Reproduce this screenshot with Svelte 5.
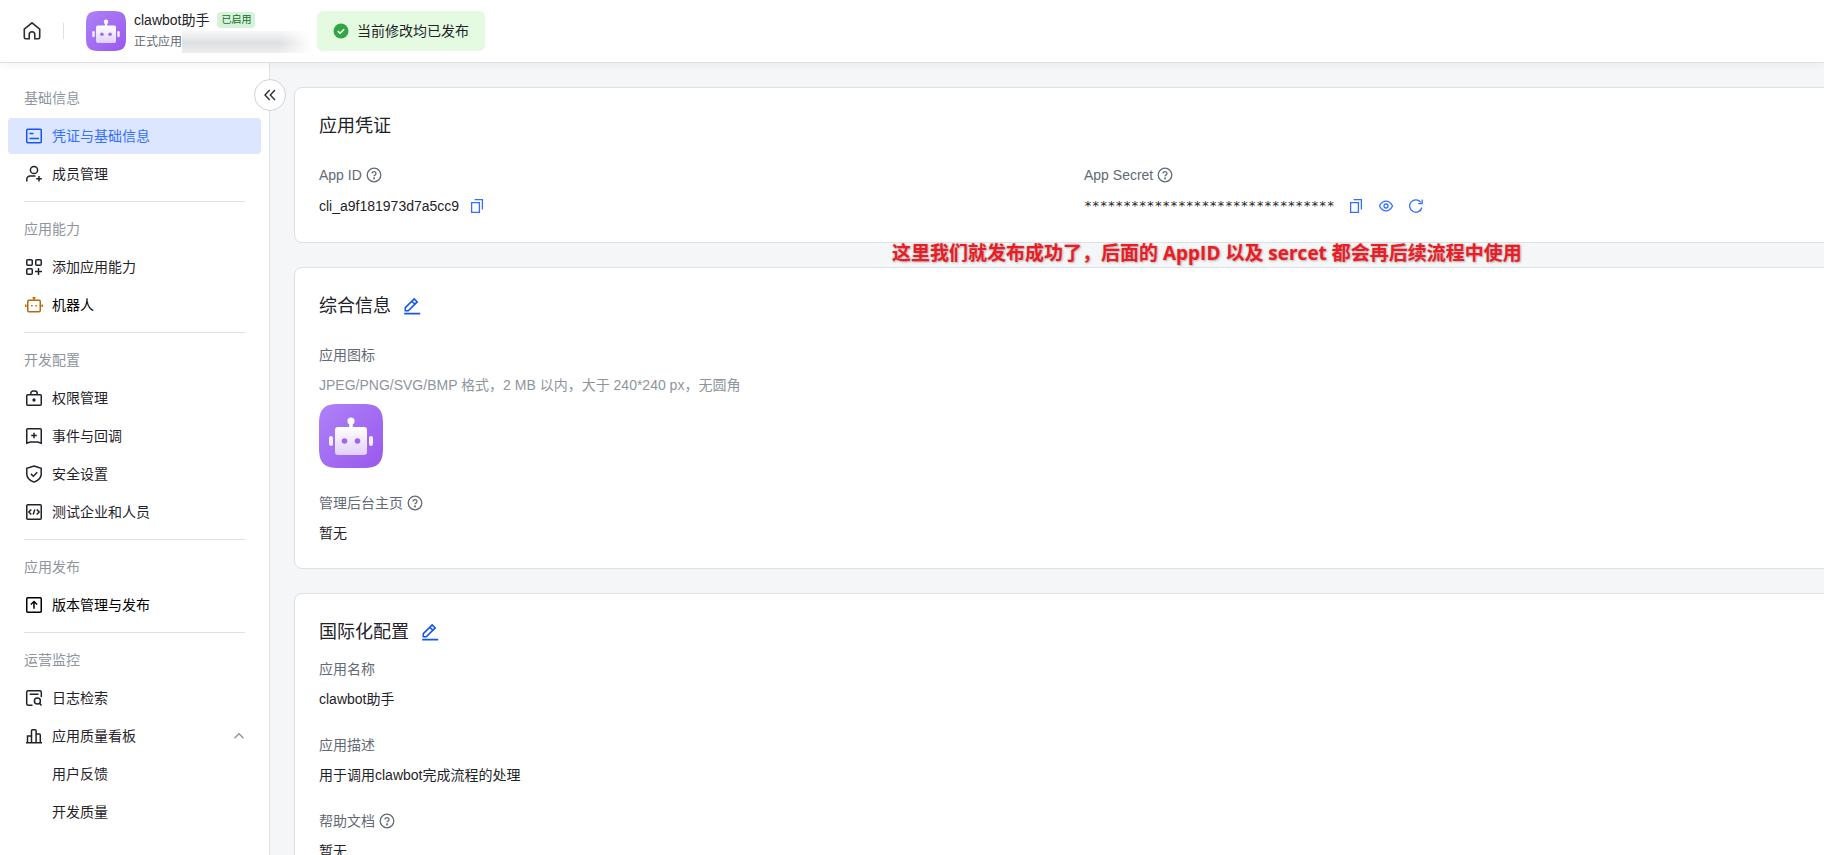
<script>
  let secretVisible = false;
  let qualityOpen = true;
  let collapsed = false;

  const groups = [
    {
      title: '基础信息',
      items: [
        { label: '凭证与基础信息', icon: 'profile', active: true },
        { label: '成员管理', icon: 'member' },
      ],
    },
    {
      title: '应用能力',
      items: [
        { label: '添加应用能力', icon: 'grid' },
        { label: '机器人', icon: 'bot', dark: true },
      ],
    },
    {
      title: '开发配置',
      items: [
        { label: '权限管理', icon: 'lock' },
        { label: '事件与回调', icon: 'event' },
        { label: '安全设置', icon: 'shield' },
        { label: '测试企业和人员', icon: 'code' },
      ],
    },
    {
      title: '应用发布',
      items: [{ label: '版本管理与发布', icon: 'publish', dark: true }],
    },
    {
      title: '运营监控',
      items: [
        { label: '日志检索', icon: 'log' },
        { label: '应用质量看板', icon: 'chart', children: ['用户反馈', '开发质量'] },
      ],
    },
  ];

  // 18x18 outline icons
  const icons = {
    profile: '<rect x="1.75" y="2.25" width="14.5" height="13.5" rx="1"/><path d="M4.5 6.5h4M4.5 11.5h9.5"/>',
    member: '<circle cx="9" cy="5" r="3.6"/><path d="M1.8 16.5v-2.3a3.2 3.2 0 0 1 3.2-3.2h5.5M14 11v5.6M11.2 13.8h5.6"/>',
    grid: '<rect x="1.75" y="1.75" width="5.5" height="5.5" rx="1"/><rect x="10.75" y="1.75" width="5.5" height="5.5" rx="1"/><rect x="1.75" y="10.75" width="5.5" height="5.5" rx="1"/><path d="M13.5 10v7M10 13.5h7"/>',
    bot: '<rect x="2.75" y="4.25" width="12.5" height="11.5" rx="1.2"/><path d="M9 4V1.5M7.6 1.8h2.8M.8 8.5v2.6M17.2 8.5v2.6M6.9 9v1.6M11.1 9v1.6"/>',
    lock: '<rect x="1.75" y="5.75" width="14.5" height="10.5" rx="1"/><path d="M5.8 5.5V4.4A2.4 2.4 0 0 1 8.2 2h1.6a2.4 2.4 0 0 1 2.4 2.4v1.1"/><circle cx="9" cy="11" r=".9" fill="currentColor"/>',
    event: '<path d="M1.75 2.75a1 1 0 0 1 1-1h12.5a1 1 0 0 1 1 1v13.5l-3.5-1.2h-7.5l-3.5 1.2zM9 5.700v5.600M6.200 8.500h5.600"/>',
    shield: '<path d="M9 1l7.2 2.4v5.8c0 3.600-3.400 6.400-7.200 7.900-3.800-1.500-7.200-4.300-7.200-7.900V3.400z"/><path d="M5.900 8.900l2.400 2.300 4-4"/>',
    code: '<rect x="1.75" y="1.75" width="14.5" height="14.5" rx="1"/><path d="M6.300 6.400 3.800 9l2.500 2.600M11.700 6.400 14.200 9l-2.500 2.600M9.800 6.500l-1.600 5"/>',
    publish: '<rect x="1.75" y="1.75" width="14.5" height="14.5" rx="1"/><path d="M9 12.800v-7M5.900 8.500l3.100-3 3.100 3"/>',
    log: '<path d="M7.500 16.250H3.200a1.500 1.500 0 0 1-1.500-1.500V3.250a1.500 1.500 0 0 1 1.500-1.500h11.600a1.500 1.500 0 0 1 1.500 1.500V8M4.700 5.300h8.800"/><circle cx="12.400" cy="12" r="3"/><path d="M14.500 14.200l2 2.300"/>',
    chart: '<path d="M1 15.750h16M2.500 15.500V9h3.800M6.500 15.500V3.750a1 1 0 0 1 1-1h2.600a1 1 0 0 1 1 1V15.500M11.300 7h3a1 1 0 0 1 1 1v7.500"/>',
  };
</script>

{#snippet robot(size, id)}
  <svg class="robot" width={size} height={size} viewBox="0 0 64 64" aria-hidden="true">
    <defs>
      <linearGradient id="{id}-bg" x1="0" y1="0" x2="1" y2="1">
        <stop offset="0" stop-color="#ad82f7" />
        <stop offset="1" stop-color="#9a58ee" />
      </linearGradient>
      <linearGradient id="{id}-face" x1="0" y1="0" x2="0" y2="1">
        <stop offset="0" stop-color="#fff" />
        <stop offset="1" stop-color="#e2d0fb" />
      </linearGradient>
    </defs>
    <path d="M0 20C0 5 5 0 20 0h24c15 0 20 5 20 20v24c0 15-5 20-20 20H20C5 64 0 59 0 44z" fill="url(#{id}-bg)" />
    <circle cx="32" cy="17" r="3.6" fill="#fff" />
    <path d="M30.2 18h3.6v6h-3.6z" fill="#fff" />
    <rect x="16" y="23" width="32" height="28" rx="3" fill="url(#{id}-face)" />
    <rect x="10" y="32" width="4" height="10" rx="2" fill="#f4edfe" />
    <rect x="50" y="32" width="4" height="10" rx="2" fill="#f4edfe" />
    <circle cx="25.5" cy="37" r="2.8" fill="#a066f0" />
    <circle cx="38.5" cy="37" r="2.8" fill="#a066f0" />
  </svg>
{/snippet}

{#snippet help(label)}
  <button class="icon-btn help" aria-label={label}>
    <svg width="16" height="16" viewBox="0 0 16 16">
      <circle cx="8" cy="8" r="6.8" />
      <path d="M6 6.500a2 1.900 0 1 1 3 1.600c-.7.4-1 .7-1 1.200" />
      <circle cx="8" cy="11.400" r=".4" />
    </svg>
  </button>
{/snippet}

{#snippet copy(label)}
  <button class="icon-btn" aria-label={label}>
    <svg width="14" height="14" viewBox="0 0 14 14">
      <path d="M1.600 3.600h7.800v9.800H1.600zM4.600.600h7.800v9.800" />
    </svg>
  </button>
{/snippet}

{#snippet edit(label)}
  <button class="icon-btn edit" aria-label={label}>
    <svg width="18" height="18" viewBox="0 0 18 18">
      <path d="M2.300 13.700v-3.100l8.900-8.700 3 3-8.900 8.800zM8.900 4.300l2.900 2.900M1.200 16.600h16" />
    </svg>
  </button>
{/snippet}

<div class="page">
  <header class="topbar">
    <a class="home" href="#home" aria-label="首页">
      <svg width="20" height="20" viewBox="0 0 20 20">
        <path d="M2.300 8.200 10 1.800l7.700 6.400v8.300a1.200 1.200 0 0 1-1.200 1.200h-3.700v-4.200a2.800 2.800 0 0 0-5.600 0v4.200H3.500a1.200 1.200 0 0 1-1.200-1.200z" />
      </svg>
    </a>
    <span class="bar"></span>
    <div class="app">
      {@render robot(40, 'small')}
      <div class="app-text">
        <div class="app-name">clawbot助手 <span class="badge">已启用</span></div>
        <div class="app-sub">正式应用<span class="mask"></span></div>
      </div>
    </div>
    <div class="notice">
      <svg width="16" height="16" viewBox="0 0 16 16" aria-hidden="true">
        <circle cx="8" cy="8" r="7.5" fill="#32a645" />
        <path d="M4.800 8.100l2.300 2.200 4.100-4" fill="none" stroke="#fff" stroke-width="1.5" />
      </svg>
      <span>当前修改均已发布</span>
    </div>
  </header>

  <div class="body">
    <div class="side" class:collapsed>
      <nav>
        {#each groups as group}
          <section class="group">
            <h2>{group.title}</h2>
            {#each group.items as item}
              {#if item.children}
                <button class="item" aria-expanded={qualityOpen} on:click={() => (qualityOpen = !qualityOpen)}>
                  <svg class="nav-icon" width="18" height="18" viewBox="0 0 18 18">{@html icons[item.icon]}</svg>
                  <span>{item.label}</span>
                  <svg class="chevron" class:closed={!qualityOpen} width="12" height="12" viewBox="0 0 12 12">
                    <path d="M1.500 8.200 6 3.800l4.500 4.400" />
                  </svg>
                </button>
                {#if qualityOpen}
                  {#each item.children as child}
                    <a class="item sub" href="#sub">{child}</a>
                  {/each}
                {/if}
              {:else}
                <a class="item" class:bot={item.icon === 'bot'} class:active={item.active} class:dark={item.dark} href="#{item.icon}">
                  <svg class="nav-icon" width="18" height="18" viewBox="0 0 18 18">{@html icons[item.icon]}</svg>
                  <span>{item.label}</span>
                </a>
              {/if}
            {/each}
          </section>
        {/each}
      </nav>
      <button class="toggle" aria-label="收起导航" on:click={() => (collapsed = !collapsed)}>
        <svg width="14" height="14" viewBox="0 0 14 14">
          <path d="M6.700 2 2 7l4.700 5M12 2 7.300 7l4.700 5" />
        </svg>
      </button>
    </div>

    <main>
      <section class="card">
        <h1>应用凭证</h1>
        <div class="columns">
          <div class="field">
            <div class="label">App ID {@render help('App ID 说明')}</div>
            <div class="value with-actions">
              <span>cli_a9f181973d7a5cc9</span>
              {@render copy('复制 App ID')}
            </div>
          </div>
          <div class="field">
            <div class="label">App Secret {@render help('App Secret 说明')}</div>
            <div class="value with-actions">
              <span class="secret">********************************</span>
              {@render copy('复制 App Secret')}
              <button class="icon-btn" aria-label="显示" aria-pressed={secretVisible} on:click={() => (secretVisible = !secretVisible)}>
                <svg width="14" height="14" viewBox="0 0 14 14">
                  <path d="M.5 7C2 4.200 4.300 2.200 7 2.200S12 4.200 13.500 7C12 9.800 9.700 11.800 7 11.800S2 9.800.5 7z" />
                  <circle cx="7" cy="7" r="2" />
                </svg>
              </button>
              <button class="icon-btn" aria-label="重置">
                <svg width="14" height="14" viewBox="0 0 14 14">
                  <path d="M12.900 8.500A6.200 6.200 0 1 1 12 3.500M13.200.6v4H9.200" />
                </svg>
              </button>
            </div>
          </div>
        </div>
        <p class="annotation">这里我们就发布成功了，后面的 AppID 以及 sercet 都会再后续流程中使用</p>
      </section>

      <section class="card">
        <h1>综合信息 {@render edit('编辑综合信息')}</h1>
        <div class="fields">
          <div class="field">
            <div class="label">应用图标</div>
            <div class="hint">JPEG/PNG/SVG/BMP 格式，2 MB 以内，大于 240*240 px，无圆角</div>
            {@render robot(64, 'large')}
          </div>
          <div class="field">
            <div class="label">管理后台主页 {@render help('管理后台主页说明')}</div>
            <div class="value">暂无</div>
          </div>
        </div>
      </section>

      <section class="card compact">
        <h1>国际化配置 {@render edit('编辑国际化配置')}</h1>
        <div class="fields">
          <div class="field">
            <div class="label">应用名称</div>
            <div class="value">clawbot助手</div>
          </div>
          <div class="field">
            <div class="label">应用描述</div>
            <div class="value">用于调用clawbot完成流程的处理</div>
          </div>
          <div class="field">
            <div class="label">帮助文档 {@render help('帮助文档说明')}</div>
            <div class="value">暂无</div>
          </div>
        </div>
      </section>
    </main>
  </div>
</div>

<style>
  :global(body) {
    background: #f5f6f7;
  }

  .page {
    height: 100vh;
    display: flex;
    flex-direction: column;
    overflow: hidden;
    font-family: 'Liberation Sans', 'Noto Sans CJK SC', sans-serif;
    font-size: 14px;
    line-height: 22px;
    color: #1f2329;
  }

  button {
    padding: 0;
    border: 0;
    background: none;
    font: inherit;
    color: inherit;
    cursor: pointer;
  }

  a {
    color: inherit;
    text-decoration: none;
  }

  svg {
    flex: none;
    display: block;
  }

  /* header */
  .topbar {
    position: relative;
    z-index: 2;
    display: flex;
    align-items: center;
    height: 62px;
    padding: 0 22px;
    background: #fff;
    border-bottom: 1px solid #dee0e3;
    box-shadow: 0 2px 8px rgba(31, 35, 41, 0.05);
    flex: none;
  }

  .home svg {
    fill: none;
    stroke: #2b2f36;
    stroke-width: 1.6;
  }

  .bar {
    width: 1px;
    height: 16px;
    margin: 0 22px 0 21px;
    background: #dee0e3;
  }

  .app {
    display: flex;
    align-items: center;
    gap: 8px;
  }

  .app-name {
    display: flex;
    align-items: center;
    gap: 8px;
  }

  .badge {
    padding: 0 4px;
    border-radius: 4px;
    background: #d5f3da;
    color: #186d29;
    font-size: 10px;
    line-height: 16px;
  }

  .app-sub {
    display: flex;
    align-items: center;
    font-size: 12px;
    color: #646a73;
  }

  .mask {
    width: 130px;
    height: 22px;
    background: linear-gradient(#f7f7f8, #dfe0e2 55%, #eeeeef);
    -webkit-mask-image: linear-gradient(90deg, #000 75%, transparent);
    mask-image: linear-gradient(90deg, #000 75%, transparent);
  }

  .notice {
    display: flex;
    align-items: center;
    gap: 8px;
    height: 40px;
    margin-left: 5px;
    padding: 0 16px;
    border-radius: 6px;
    background: #e4fae1;
  }

  .body {
    display: flex;
    flex: 1;
    min-height: 0;
  }

  /* navigation */
  .side {
    position: relative;
    flex: none;
    box-sizing: border-box;
    width: 270px;
    padding: 17px 8px 0;
    background: #fff;
    border-right: 1px solid #dee0e3;
  }

  .side.collapsed {
    width: 24px;
  }

  .side.collapsed nav {
    display: none;
  }

  .group {
    display: flex;
    flex-direction: column;
    gap: 2px;
  }

  .group + .group {
    margin: 9px 16px 0;
    padding-top: 9px;
    border-top: 1px solid #dee0e3;
  }

  .group + .group .item {
    margin: 0 -16px;
  }

  .group + .group h2 {
    padding: 0;
  }

  .group h2 {
    margin: 0;
    padding: 0 16px;
    font-size: 14px;
    font-weight: 400;
    line-height: 36px;
    color: #8f959e;
  }

  .item {
    display: flex;
    align-items: center;
    gap: 9px;
    height: 36px;
    padding: 0 16px 0 17px;
    border-radius: 4px;
    text-align: left;
  }

  .item.active {
    background: #dce6ff;
    color: #3370ff;
  }

  .item.dark {
    color: #000;
  }

  .item.sub {
    padding-left: 44px;
  }

  .nav-icon {
    fill: none;
    stroke: currentColor;
    stroke-width: 1.5;
  }

  .active .nav-icon {
    stroke: #1456f0;
  }

  .bot .nav-icon {
    color: #b8680a;
  }

  .chevron {
    margin-left: auto;
    fill: none;
    stroke: #8f959e;
    stroke-width: 1.4;
  }

  .chevron.closed {
    transform: rotate(180deg);
  }

  .toggle {
    position: absolute;
    top: 16px;
    right: -17px;
    z-index: 1;
    display: grid;
    place-items: center;
    width: 32px;
    height: 32px;
    border: 1px solid #d0d3d6;
    border-radius: 50%;
    background: #fff;
  }

  .toggle svg {
    fill: none;
    stroke: #2b2f36;
    stroke-width: 1.4;
  }

  /* content */
  main {
    flex: 1;
    display: flex;
    flex-direction: column;
    gap: 24px;
    margin-right: -50px;
    padding: 24px 0 0 24px;
  }

  .card {
    position: relative;
    flex: none;
    padding: 24px;
    background: #fff;
    border: 1px solid #dee0e3;
    border-radius: 8px;
  }

  h1 {
    display: flex;
    align-items: center;
    gap: 12px;
    margin: 0 0 24px;
    font-size: 18px;
    font-weight: 400;
    line-height: 28px;
  }

  .compact h1 {
    margin-bottom: 12px;
  }

  .columns {
    display: grid;
    grid-template-columns: 1fr 1fr;
  }

  .fields {
    display: flex;
    flex-direction: column;
    gap: 24px;
  }

  .field {
    display: flex;
    flex-direction: column;
    gap: 8px;
  }

  .label {
    display: flex;
    align-items: center;
    gap: 4px;
    color: #646a73;
  }

  .hint {
    color: #8f959e;
  }

  .with-actions {
    display: flex;
    align-items: center;
    gap: 16px;
    height: 24px;
  }

  .with-actions span {
    margin-right: -5px;
  }

  .secret {
    min-width: 254px;
    font-family: 'DejaVu Sans Mono', monospace;
    font-size: 13px;
  }

  .icon-btn svg {
    fill: none;
    stroke: #3370ff;
    stroke-width: 1.3;
  }

  .help svg {
    stroke: #646a73;
  }

  .edit svg {
    stroke: #1456f0;
    stroke-width: 1.6;
  }

  .annotation {
    position: absolute;
    top: 100%;
    left: 597px;
    margin: 0;
    font-family: 'Open Sans', 'Noto Sans CJK SC', sans-serif;
    font-size: 19px;
    font-weight: 700;
    line-height: 22px;
    white-space: nowrap;
    color: #ed1c24;
    text-shadow: 0 0 2px #a9abae, 1px 1px 2px #b9bbbe;
  }
</style>
